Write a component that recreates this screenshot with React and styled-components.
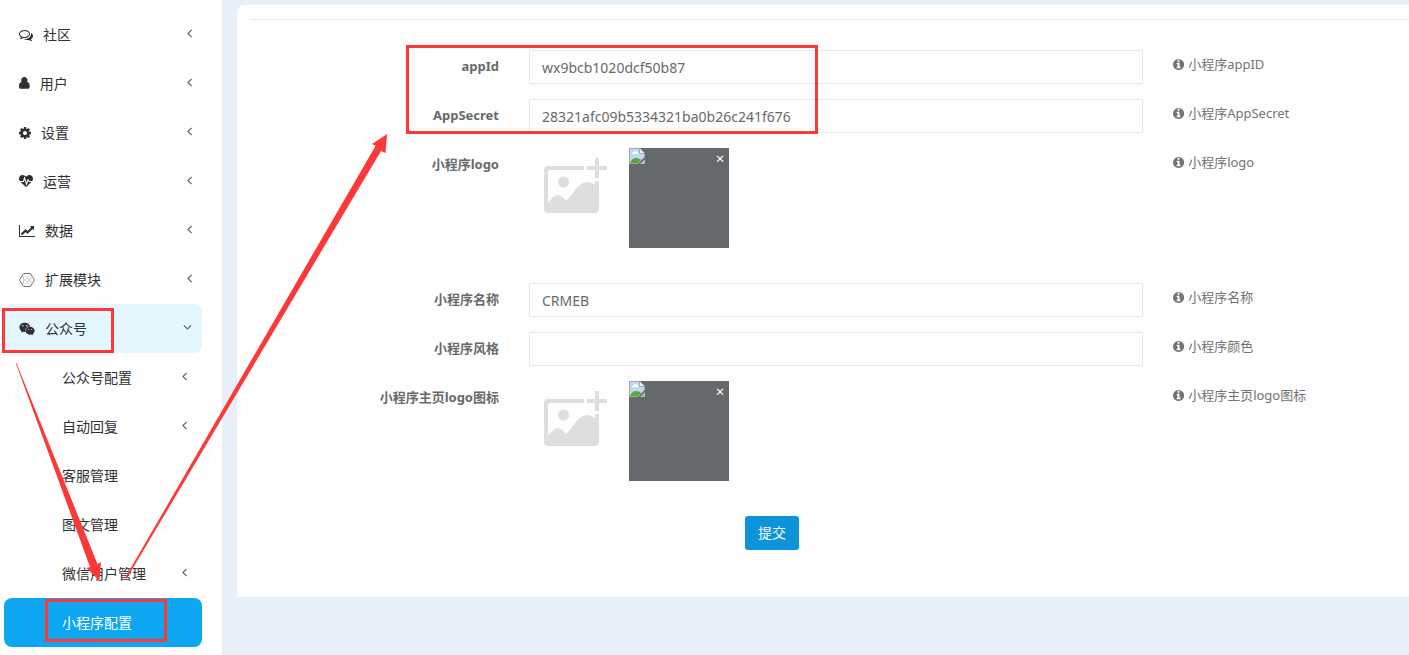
import { useState } from "react";
import styled, { createGlobalStyle } from "styled-components";
import { FaWeixin } from "react-icons/fa";

const GlobalStyle = createGlobalStyle`
  * { box-sizing: border-box; }
  body {
    margin: 0;
    background: #e7f0f8;
    color: #676a6c;
    font-family: "Noto Sans", "Noto Sans CJK SC", sans-serif;
    font-size: 13px;
    line-height: 20px;
  }
  button, input { font-family: inherit; }
`

let Page = styled.div`
  position: relative;
  display: flex;
  min-height: 100vh;
  overflow: hidden;
`

// ---------------- sidebar ----------------

let Sidebar = styled.nav`
  flex: none;
  width: 222px;
  padding: 10px 20px 8px 4px;
  background: #fefefe;
`

let Menu = styled.ul`
  margin: 0;
  padding: 0;
  list-style: none;
`

let MenuLink = styled.a`
  display: flex;
  align-items: center;
  gap: 10px;
  height: 49px;
  padding: ${props => props.$sub ? '0 15px 0 58px' : '0 10px 0 15px'};
  border-radius: 8px;
  background: ${props => props.$active ? '#0ca7f0' : props.$open ? '#e5f7fe' : 'transparent'};
  color: ${props => props.$active ? '#fff' : '#2f3033'};
  font-size: 14px;
  text-decoration: none;
`

let MenuText = styled.span`
  flex: 1;
`

let Arrow = styled.span`
  display: flex;
  padding-bottom: 3px;
  color: #555;
`

let Glyph = styled.svg`
  display: block;
  flex: none;
  height: ${props => props.$size || 14}px;
  fill: currentColor;
`

// ---------------- form ----------------

let Content = styled.main`
  flex: 1;
  min-width: 0;
  padding: 5px 0 0 15px;
`

let Panel = styled.section`
  padding: 14px 0 47px 15px;
  border-radius: 8px 0 0 0;
  background: #fefefe;
`

let Form = styled.form`
  display: flex;
  flex-direction: column;
  gap: 15px;
  padding-top: 30px;
  border-top: 1px solid #e7e7e7;
`

let Row = styled.div`
  display: grid;
  grid-template-columns: 262fr 644fr 251fr;
  min-height: ${props => props.$tall ? 120 : 34}px;
`

let Label = styled.label`
  padding: 6px 15px 0;
  font-weight: 700;
  text-align: right;
`

let Field = styled.div`
  display: flex;
  min-width: 0;
  padding: 0 15px;
`

let TextInput = styled.input`
  width: 100%;
  height: 34px;
  padding: 6px 12px;
  border: 1px solid #e5e6e7;
  border-radius: 1px;
  background: #fefefe;
  color: #676a6c;
  font-size: 14px;
  outline: none;
`

let Help = styled.p`
  display: flex;
  align-items: center;
  align-self: start;
  gap: 4px;
  margin: 0;
  padding: 4px 15px;
  color: #737373;
  white-space: nowrap;
`

let UploadBtn = styled.button`
  width: 100px;
  height: 80px;
  padding: 10px 15px;
  border: none;
  background: none;
  text-align: left;
  cursor: pointer;
`

let Thumb = styled.div`
  display: flex;
  align-items: flex-start;
  justify-content: space-between;
  width: 100px;
  height: 100px;
  background: #65696c;
`

let RemoveBtn = styled.button`
  width: 18px;
  height: 20px;
  padding: 0;
  border: none;
  background: none;
  color: #fff;
  font-size: 15px;
  line-height: 20px;
  cursor: pointer;
`

let Actions = styled.div`
  display: grid;
  grid-template-columns: 493fr 664fr;
`

let SubmitBtn = styled.button`
  grid-column: 2;
  justify-self: start;
  height: 34px;
  padding: 0 13px 2px;
  border: none;
  border-radius: 3px;
  background: #0c93dc;
  color: #fff;
  font-size: 14px;
  cursor: pointer;
`

let Marks = styled.svg`
  position: absolute;
  top: 0;
  left: 0;
  pointer-events: none;
`

// [width of the glyph, path]
let glyphs = {
  comments: [1792, "M704 384q-153 0-286 52t-211.500 141-78.500 191q0 82 53 158t149 132l97 56-35 84q34-20 62-39l44-31 53 10q78 14 153 14 153 0 286-52t211.500-141 78.500-191-78.500-191-211.500-141-286-52zm0-128q191 0 353.500 68.500t256.500 186.500 94 257-94 257-256.500 186.500-353.500 68.500q-86 0-176-16-124 88-278 128-36 9-86 16h-3q-11 0-20.500-8t-11.500-21q-1-3-1-6.500t.5-6.500 2-6l2.500-5 3.500-5.500 4-5 4.500-5 4-4.500q5-6 23-25t26-29.500 22.500-29 25-38.500 20.500-44q-124-72-195-177t-71-224q0-139 94-257t256.500-186.500 353.500-68.500zm822 1169q10 24 20.500 44t25 38.500 22.500 29 26 29.500 23 25q1 1 4 4.500t4.500 5 4 5 3.500 5.500l2.500 5 2 6 .5 6.500-1 6.500q-3 14-13 22t-22 7q-50-7-86-16-154-40-278-128-90 16-176 16-271 0-472-132 58 4 88 4 161 0 309-45t264-129q125-92 192-212t67-254q0-77-23-152 129 71 204 178t75 230q0 120-71 224.500t-195 176.500z"],
  user: [1280, "M1280 1271q0 109-62.500 187t-150.500 78h-854q-88 0-150.500-78t-62.500-187q0-85 8.500-160.500t31.500-152 58.500-131 94-89 134.500-34.500q131 128 313 128t313-128q76 0 134.500 34.500t94 89 58.500 131 31.500 152 8.500 160.500zM1024 512q0 159-112.500 271.500t-271.500 112.500-271.500-112.500-112.500-271.500 112.500-271.500 271.500-112.500 271.500 112.500 112.500 271.500z"],
  cog: [1536, "M1024 896q0-106-75-181t-181-75-181 75-75 181 75 181 181 75 181-75 75-181zm512-109v222q0 12-8 23t-20 13l-185 28q-19 54-39 91 35 50 107 138 10 12 10 25t-9 23q-27 37-99 108t-94 71q-12 0-26-9l-138-108q-44 23-91 38-16 136-29 186-7 28-36 28h-222q-14 0-24.500-8.500t-11.500-21.500l-28-184q-49-16-90-37l-141 107q-10 9-25 9-14 0-25-11-126-114-165-168-7-10-7-23 0-12 8-23 15-21 51-66.500t54-70.500q-27-50-41-99l-183-27q-13-2-21-12.500t-8-23.500v-222q0-12 8-23t19-13l186-28q14-46 39-92-40-57-107-138-10-12-10-24 0-10 9-23 26-36 98.500-107.500t94.500-71.500q13 0 26 10l138 107q44-23 91-38 16-136 29-186 7-28 36-28h222q14 0 24.500 8.500t11.500 21.500l28 184q49 16 90 37l142-107q9-9 24-9 13 0 25 10 129 119 165 170 7 8 7 22 0 12-8 23-15 21-51 66.500t-54 70.500q26 50 41 98l183 28q13 2 21 12.500t8 23.500z"],
  heartbeat: [1792, "M1280 896h305q-5 6-10 10.500t-9 7.500l-3 4-623 600q-18 18-44 18t-44-18l-624-602q-5-2-21-20h369q22 0 39.500-13.500t22.500-34.500l70-281 190 667q6 20 23 33t39 13q21 0 38-13t23-33l146-485 56 112q18 35 57 35zm512-428q0 145-103 300h-369l-111-221q-8-17-25.500-27t-36.500-8q-45 5-56 46l-129 430-196-686q-6-20-23.500-33t-39.500-13-39 13.500-22 34.500l-116 464h-423q-103-155-103-300 0-220 127-344t351-124q62 0 126.500 21.500t120 58 95.500 68.500 76 68q36-36 76-68t95.500-68.500 120-58 126.500-21.500q224 0 351 124t127 344z"],
  chart: [2048, "M2048 1536v128h-2048v-1536h128v1408h1920zm-128-1248v435q0 21-19.500 29.500t-35.500-7.500l-121-121-633 633q-10 10-23 10t-23-10l-233-233-416 416-192-192 585-585q10-10 23-10t23 10l233 233 464-464-121-121q-16-16-7.500-35.500t29.500-19.500h435q14 0 23 9t9 23z"],
  info: [1536, "M1024 1376v-160q0-14-9-23t-23-9h-96v-512q0-14-9-23t-23-9h-320q-14 0-23 9t-9 23v160q0 14 9 23t23 9h96v320h-96q-14 0-23 9t-9 23v160q0 14 9 23t23 9h448q14 0 23-9t9-23zm-128-896v-192q0-14-9-23t-23-9h-192q-14 0-23 9t-9 23v192q0 14 9 23t23 9h192q14 0 23-9t9-23zm640 416q0 209-103 385.500t-279.500 279.500-385.500 103-385.500-103-279.500-279.500-103-385.500 103-385.500 279.500-279.500 385.500-103 385.500 103 279.500 279.500 103 385.500z"],
  left: [640, "M627 544q0 13-10 23l-393 393 393 393q10 10 10 23t-10 23l-50 50q-10 10-23 10t-23-10l-466-466q-10-10-10-23t10-23l466-466q10-10 23-10t23 10l50 50q10 10 10 23z"],
  down: [1152, "M1075 736q0 13-10 23l-466 466q-10 10-23 10t-23-10l-466-466q-10-10-10-23t10-23l50-50q10-10 23-10t23 10l393 393 393-393q10-10 23-10t23 10l50 50q10 10 10 23z"],
}

function Icon({ name, size }){
  if(name == 'weixin'){
    return <FaWeixin size={16} />
  }
  if(name == 'hexagon'){
    return (
      <svg width="16" height="16" viewBox="0 0 16 16" fill="none" stroke="#777" strokeWidth="1">
        <path d="M4.500 1.500h7L15.500 8l-4 6.500h-7L.5 8z" />
        <path d="M4.500 1.500L13 12M11.500 1.500L3 12M4.500 4v8M11.500 4v8M4.500 14.500L13 4M11.500 14.500L3 4" stroke="#bbb" strokeWidth=".6" />
      </svg>
    )
  }
  let [w, d] = glyphs[name]
  return <Glyph $size={size} viewBox={`0 0 ${w} 1792`} aria-hidden="true"><path d={d} /></Glyph>
}

let menus = [
  { text: '社区', icon: 'comments', arrow: 'left' },
  { text: '用户', icon: 'user', size: 15, arrow: 'left' },
  { text: '设置', icon: 'cog', arrow: 'left' },
  { text: '运营', icon: 'heartbeat', arrow: 'left' },
  { text: '数据', icon: 'chart', arrow: 'left' },
  { text: '扩展模块', icon: 'hexagon', arrow: 'left' },
  { text: '公众号', icon: 'weixin', arrow: 'down', open: true },
  { text: '公众号配置', sub: true, arrow: 'left' },
  { text: '自动回复', sub: true, arrow: 'left' },
  { text: '客服管理', sub: true },
  { text: '图文管理', sub: true },
  { text: '微信用户管理', sub: true, arrow: 'left' },
  { text: '小程序配置', sub: true, active: true },
]

let fields = [
  { id: 'appid', label: 'appId', help: '小程序appID', value: 'wx9bcb1020dcf50b87' },
  { id: 'secret', label: 'AppSecret', help: '小程序AppSecret', value: '28321afc09b5334321ba0b26c241f676' },
  { id: 'logo', label: '小程序logo', help: '小程序logo', upload: true },
  { id: 'name', label: '小程序名称', help: '小程序名称', value: 'CRMEB' },
  { id: 'style', label: '小程序风格', help: '小程序颜色', value: '' },
  { id: 'homelogo', label: '小程序主页logo图标', help: '小程序主页logo图标', upload: true },
]

function MenuItem({ item }){
  return (
    <li>
      <MenuLink href="#" $sub={item.sub} $open={item.open} $active={item.active}>
        {item.icon && <Icon name={item.icon} size={item.size} />}
        <MenuText>{item.text}</MenuText>
        {item.arrow && <Arrow><Icon name={item.arrow} /></Arrow>}
      </MenuLink>
    </li>
  )
}

function Upload({ id, label }){
  return (
    <>
      <UploadBtn type="button" id={id} aria-label={label}>
        <svg width="64" height="56" viewBox="0 0 64 56" fill="#dedede">
          <path d="M40 8v4H7q-3 0-3 3v30q5-7 9-8 4-1 9 6 5-5 9-11 10-13 20-5V23h4v28q0 4-4 4H4q-4 0-4-4V12q0-4 4-4z" />
          <circle cx="19.500" cy="24" r="5.500" />
          <path d="M51 0h4v8h8v4h-8v8h-4v-8h-8V8h8z" />
        </svg>
      </UploadBtn>
      <Thumb>
        <BrokenImage />
        <RemoveBtn type="button" aria-label="remove">×</RemoveBtn>
      </Thumb>
    </>
  )
}

function BrokenImage(){
  return (
    <svg width="16" height="16" viewBox="0 0 16 16">
      <path d="M0 0h11l5 5v4L9 16H0z" fill="#a5a5a5" />
      <path d="M1 1h9v5h5v3L9 15H1z" fill="#c4d7f7" />
      <path d="M3 6q0-2 2-2 2-2 3 0 2 0 2 2z" fill="#fff" />
      <path d="M1 15q2-5 6-5 3 0 5 2l-3 3z" fill="#51ad32" />
      <path d="M11 1l4 4h-4z" fill="#f3f3f3" />
      <path d="M16 11v5h-5z" fill="#a9c6a5" />
    </svg>
  )
}

function FormRow({ field }){
  let [value, setValue] = useState(field.value)
  return (
    <Row $tall={field.upload}>
      <Label htmlFor={field.id}>{field.label}</Label>
      <Field>
        {
          field.upload
          ? <Upload id={field.id} label={field.label} />
          : <TextInput id={field.id} type="text" value={value} onChange={(e)=>{ setValue(e.target.value) }} />
        }
      </Field>
      <Help><Icon name="info" size={13} />{field.help}</Help>
    </Row>
  )
}

// red boxes and arrows that lie over the page
function Annotations(){
  return (
    <Marks width="820" height="655" viewBox="0 0 820 655" aria-hidden="true">
      <g fill="none" stroke="#fc3938" strokeWidth="3">
        <rect x="3.500" y="309.500" width="109" height="42" />
        <rect x="46.500" y="600.500" width="119" height="40" />
        <rect x="407.500" y="46.500" width="409" height="86" />
      </g>
      <g fill="#fc3938">
        <path d="M15.800 363.300L16.400 363 97.500 564l3.500-2-1.500 19L86.500 568l3.500-1z" />
        <path d="M125.300 577.500L375.500 146l-3.500-2 15-10-1.500 19-4.500-2L126.700 578.500z" />
      </g>
    </Marks>
  )
}

export default function App(){
  return (
    <Page>
      <GlobalStyle />
      <Sidebar>
        <Menu>
          {menus.map((item)=> <MenuItem key={item.text} item={item} />)}
        </Menu>
      </Sidebar>
      <Content>
        <Panel>
          <Form onSubmit={(e)=>{ e.preventDefault() }}>
            {fields.map((field)=> <FormRow key={field.id} field={field} />)}
            <Actions>
              <SubmitBtn type="submit">提交</SubmitBtn>
            </Actions>
          </Form>
        </Panel>
      </Content>
      <Annotations />
    </Page>
  )
}
